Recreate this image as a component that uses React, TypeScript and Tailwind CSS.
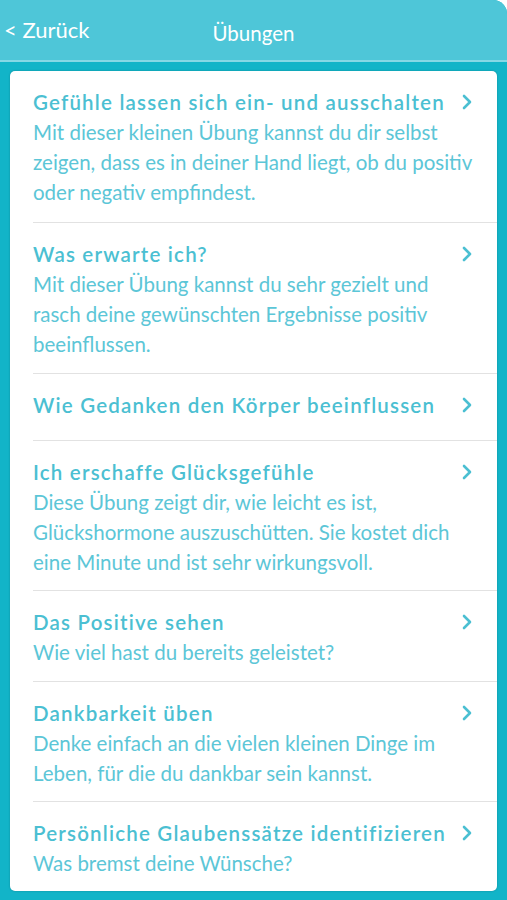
import React from "react";

const items: { title: string; desc?: string; pad: string }[] = [
  {
    title: "Gefühle lassen sich ein- und ausschalten",
    desc: "Mit dieser kleinen Übung kannst du dir selbst zeigen, dass es in deiner Hand liegt, ob du positiv oder negativ empfindest.",
    pad: "pt-[16px] pb-[15px]",
  },
  {
    title: "Was erwarte ich?",
    desc: "Mit dieser Übung kannst du sehr gezielt und rasch deine gewünschten Ergebnisse positiv beeinflussen.",
    pad: "pt-[16px] pb-[14px]",
  },
  { title: "Wie Gedanken den Körper beeinflussen", pad: "pt-[16px] pb-[20px]" },
  {
    title: "Ich erschaffe Glücksgefühle",
    desc: "Diese Übung zeigt dir, wie leicht es ist, Glückshormone auszuschütten. Sie kostet dich eine Minute und ist sehr wirkungsvoll.",
    pad: "pt-[16px] pb-[13px]",
  },
  { title: "Das Positive sehen", desc: "Wie viel hast du bereits geleistet?", pad: "pt-[16px] pb-[14px]" },
  {
    title: "Dankbarkeit üben",
    desc: "Denke einfach an die vielen kleinen Dinge im Leben, für die du dankbar sein kannst.",
    pad: "pt-[16px] pb-[13px]",
  },
  {
    title: "Persönliche Glaubenssätze identifizieren",
    desc: "Was bremst deine Wünsche?",
    pad: "pt-[16px] pb-[13px]",
  },
];

function Chevron() {
  return (
    <svg width="12" height="16" viewBox="0 0 12 16" className="shrink-0 mr-[2px]">
      <path d="M3 2 L9 8 L3 14" fill="none" stroke="#4bbfd2" strokeWidth="2.6" strokeLinecap="round" strokeLinejoin="round" />
    </svg>
  );
}

export default function App() {
  return (
    <div className="w-[507px] h-[900px] bg-white overflow-hidden" style={{ fontFamily: "Lato, 'Open Sans', sans-serif" }}>
      <div className="h-[900px] bg-[#12b4c8] rounded-tr-[14px] overflow-hidden flex flex-col">
        <div className="h-[60px] bg-[#4ec6d8] relative flex items-center justify-center shrink-0">
          <span className="absolute left-[4px] top-[15px] text-white text-[22px] leading-[30px]">&lt; Zurück</span>
          <span className="text-white text-[20.5px] leading-[30px] mt-[6px]">Übungen</span>
        </div>
        <div className="h-[2px] bg-[#86d8e5] shrink-0" />
        <div className="flex-1 px-[10px] pt-[9px] pb-[11px]">
          <div className="h-full bg-white rounded-[5px] shadow-[0_0_2px_rgba(0,0,0,0.25)] flex flex-col">
            {items.map((it, i) => (
              <div key={i} className={"ml-[23px] " + (i > 0 ? "border-t border-[#e2e2e2]" : "")}>
                <div className={"pr-[22px] " + it.pad}>
                  <div className="flex items-center justify-between gap-2">
                    <span className="text-[#4bbfd2] text-[20.5px] leading-[30px] font-semibold tracking-[1.2px] whitespace-nowrap">{it.title}</span>
                    <Chevron />
                  </div>
                  {it.desc && (
                    <div className="text-[#5cc6d7] text-[20.5px] leading-[30px]">{it.desc}</div>
                  )}
                </div>
              </div>
            ))}
          </div>
        </div>
      </div>
    </div>
  );
}
